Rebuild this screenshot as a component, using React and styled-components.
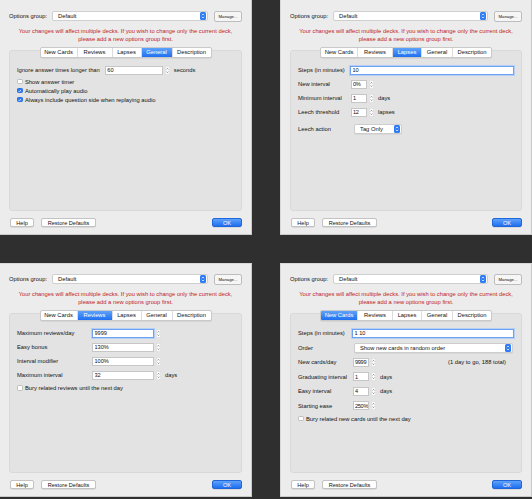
import React from "react";
import styled, { createGlobalStyle } from "styled-components";

const GlobalStyle = createGlobalStyle`
  html, body {
    margin: 0;
    padding: 0;
    background: #2f2f2f;
  }
  body {
    font-family: "Liberation Sans", Arial, sans-serif;
  }
`;

const Screen = styled.div`
  display: grid;
  grid-template-columns: 252px 252px;
  grid-template-rows: 235px 234px;
  column-gap: 28px;
  row-gap: 28px;
  width: 532px;
  height: 499px;
  background: #2f2f2f;
`;

const Window = styled.div`
  box-sizing: border-box;
  display: flex;
  flex-direction: column;
  background: #ececec;
  border: 1px solid #c9c9c9;
  border-top: ${(p) => (p.$cropTop ? "none" : "1px solid #d8d8d8")};
  border-left: ${(p) => (p.$cropLeft ? "none" : "1px solid #d8d8d8")};
  padding: ${(p) => (p.$cropTop ? "11px" : "10px")} 9px 7px 9px;
  color: #111;
  font-size: 5.8px;
`;

const HeaderRow = styled.div`
  display: flex;
  align-items: center;
  height: 10px;
`;

const GroupLabel = styled.span`
  width: 43px;
`;

const Combo = styled.div`
  box-sizing: border-box;
  flex: 1;
  height: 10px;
  display: flex;
  align-items: center;
  justify-content: space-between;
  background: #fff;
  border: 0.5px solid #cfcfcf;
  border-radius: 2px;
  padding: 0 1px 0 5px;
`;

const ManageButton = styled.div`
  box-sizing: border-box;
  width: 28px;
  height: 11px;
  margin-left: 6px;
  display: flex;
  align-items: center;
  justify-content: center;
  background: #f6f6f6;
  border: 0.5px solid #bdbdbd;
  border-radius: 2px;
  font-size: 4.3px;
`;

const Warning = styled.p`
  margin: 7px 0 0;
  line-height: 7.5px;
  text-align: center;
  color: #c22226;
`;

const TabPane = styled.div`
  box-sizing: border-box;
  flex: 1;
  margin-top: 7px;
  display: flex;
  flex-direction: column;
  background: #e3e3e3;
  border: 0.5px solid #d9d9d9;
  border-radius: 3px;
  padding: 0 7px;
`;

const TabBar = styled.div`
  display: flex;
  align-self: center;
  height: 9px;
  margin-top: -4.5px;
  background: #fff;
  border: 0.5px solid #c9c9c9;
  border-radius: 2px;
  overflow: hidden;
  box-shadow: 0 0.5px 0.5px rgba(0, 0, 0, 0.12);
`;

const Tab = styled.div`
  width: ${(p) => p.$w}px;
  display: flex;
  align-items: center;
  justify-content: center;
  border-left: 0.5px solid #dcdcdc;
  color: ${(p) => (p.$active ? "#fff" : "#111")};
  background: ${(p) =>
    p.$active ? "linear-gradient(#5ea2fa, #1f6ff0)" : "transparent"};
  &:first-child {
    border-left: none;
  }
`;

const Form = styled.div`
  display: flex;
  flex-direction: column;
  margin-top: 5.5px;
`;

const Row = styled.div`
  display: flex;
  align-items: center;
  height: ${(p) => p.$h || 14}px;
  margin-top: ${(p) => p.$gap || 0}px;
`;

const Label = styled.span`
  width: ${(p) => (p.$w ? `${p.$w}px` : "auto")};
  flex-shrink: 0;
  white-space: nowrap;
  margin-right: ${(p) => p.$mr || 0}px;
`;

const Field = styled.input`
  box-sizing: border-box;
  width: ${(p) => p.$w}px;
  height: 9px;
  margin: 0;
  padding: 0 0 0 ${(p) => (p.$w < 20 ? 1 : 1.5)}px;
  background: #fff;
  border: ${(p) => (p.$focus ? "0.8px solid #6fa1f2" : "0.5px solid #c6c6c6")};
  box-shadow: ${(p) => (p.$focus ? "0 0 0 1px #b4cff7" : "none")};
  font-family: inherit;
  font-size: 5.6px;
  letter-spacing: ${(p) => (p.$w < 20 ? "-0.3px" : "0")};
  color: #111;
  outline: none;
`;

const Unit = styled.span`
  margin-left: ${(p) => p.$ml || 4}px;
`;

const Popup = styled.div`
  box-sizing: border-box;
  width: ${(p) => p.$w}px;
  height: 10px;
  margin-left: ${(p) => p.$ml || 0}px;
  display: flex;
  align-items: center;
  justify-content: space-between;
  background: #fff;
  border: 0.5px solid #cdcdcd;
  border-radius: 2px;
  padding: 0 1px 0 5px;
  box-shadow: 0 0.5px 0.5px rgba(0, 0, 0, 0.1);
`;

const Note = styled.span`
  margin-left: auto;
  margin-right: 8px;
`;

const CheckRow = styled.label`
  display: flex;
  align-items: center;
  height: 9px;
  margin-top: ${(p) => p.$gap || 0}px;
`;

const Box = styled.span`
  box-sizing: border-box;
  width: 5.5px;
  height: 5.5px;
  margin-right: 2.5px;
  display: flex;
  align-items: center;
  justify-content: center;
  border-radius: 1.3px;
  background: ${(p) => (p.$on ? "#2f7cf6" : "#fff")};
  border: 0.5px solid ${(p) => (p.$on ? "#2a6fe0" : "#bdbdbd")};
`;

const Footer = styled.div`
  display: flex;
  align-items: center;
  gap: 7px;
  height: 9px;
  margin-top: 7px;
  padding-left: 1px;
`;

const Button = styled.div`
  box-sizing: border-box;
  width: ${(p) => p.$w}px;
  height: 8.5px;
  display: flex;
  align-items: center;
  justify-content: center;
  margin-left: ${(p) => (p.$push ? "auto" : "0")};
  border-radius: 2px;
  font-size: 5.6px;
  color: ${(p) => (p.$primary ? "#fff" : "#111")};
  background: ${(p) =>
    p.$primary ? "linear-gradient(#5ea2fa, #1f6ff0)" : "#fff"};
  border: 0.5px solid ${(p) => (p.$primary ? "#1f66d8" : "#c3c3c3")};
  box-shadow: 0 0.5px 0.5px rgba(0, 0, 0, 0.15);
`;

const Stepper = ({ ml = 2 }) => (
  <svg width="5" height="9" viewBox="0 0 5 9" style={{ marginLeft: ml, flexShrink: 0 }}>
    <rect x="0.25" y="0.25" width="4.5" height="8.5" rx="1.5" fill="#fafafa" stroke="#cdcdcd" strokeWidth="0.5" />
    <path d="M1.5 3.4 L2.5 2.4 L3.5 3.4" fill="none" stroke="#555" strokeWidth="0.6" />
    <path d="M1.5 5.6 L2.5 6.6 L3.5 5.6" fill="none" stroke="#555" strokeWidth="0.6" />
  </svg>
);

const BlueArrows = () => (
  <svg width="6" height="8" viewBox="0 0 6 8">
    <rect width="6" height="8" rx="1.5" fill="#2f7cf6" />
    <path d="M1.8 3.2 L3 2 L4.2 3.2" fill="none" stroke="#fff" strokeWidth="0.7" />
    <path d="M1.8 4.8 L3 6 L4.2 4.8" fill="none" stroke="#fff" strokeWidth="0.7" />
  </svg>
);

const Tick = () => (
  <svg width="4" height="4" viewBox="0 0 4 4">
    <path d="M0.7 2.1 L1.6 3 L3.3 0.9" fill="none" stroke="#fff" strokeWidth="0.8" />
  </svg>
);

const Check = ({ on, children, gap }) => (
  <CheckRow $gap={gap}>
    <Box $on={on}>{on && <Tick />}</Box>
    {children}
  </CheckRow>
);

const TABS = [
  ["New Cards", 36],
  ["Reviews", 34],
  ["Lapses", 28],
  ["General", 30],
  ["Description", 38],
];

const Dialog = ({ active, cropTop, cropLeft, children }) => (
  <Window $cropTop={cropTop} $cropLeft={cropLeft}>
    <HeaderRow>
      <GroupLabel>Options group:</GroupLabel>
      <Combo>
        <span>Default</span>
        <BlueArrows />
      </Combo>
      <ManageButton>Manage...</ManageButton>
    </HeaderRow>
    <Warning>
      Your changes will affect multiple decks. If you wish to change only the current deck,
      <br />
      please add a new options group first.
    </Warning>
    <TabPane>
      <TabBar>
        {TABS.map(([name, w]) => (
          <Tab key={name} $w={w} $active={name === active}>
            {name}
          </Tab>
        ))}
      </TabBar>
      <Form>{children}</Form>
    </TabPane>
    <Footer>
      <Button $w={24}>Help</Button>
      <Button $w={55}>Restore Defaults</Button>
      <Button $w={30} $primary $push>
        OK
      </Button>
    </Footer>
  </Window>
);

const GeneralTab = () => (
  <>
    <Row>
      <Label $mr={5}>Ignore answer times longer than</Label>
      <Field $w={58} readOnly value="60" />
      <Stepper />
      <Unit $ml={4}>seconds</Unit>
    </Row>
    <Check>Show answer timer</Check>
    <Check on>Automatically play audio</Check>
    <Check on>Always include question side when replaying audio</Check>
  </>
);

const LapsesTab = () => (
  <>
    <Row>
      <Label $w={52}>Steps (in minutes)</Label>
      <Field $w={169} $focus readOnly value="10" />
    </Row>
    <Row>
      <Label $w={53}>New interval</Label>
      <Field $w={16} readOnly value="0%" />
      <Stepper />
    </Row>
    <Row>
      <Label $w={53}>Minimum interval</Label>
      <Field $w={16} readOnly value="1" />
      <Stepper />
      <Unit>days</Unit>
    </Row>
    <Row>
      <Label $w={53}>Leech threshold</Label>
      <Field $w={16} readOnly value="12" />
      <Stepper />
      <Unit>lapses</Unit>
    </Row>
    <Row $gap={3}>
      <Label $w={52}>Leech action</Label>
      <Popup $w={48} $ml={4}>
        <span>Tag Only</span>
        <BlueArrows />
      </Popup>
    </Row>
  </>
);

const ReviewsTab = () => (
  <>
    <Row>
      <Label $w={75}>Maximum reviews/day</Label>
      <Field $w={62} $focus readOnly value="9999" />
      <Stepper />
    </Row>
    <Row>
      <Label $w={75}>Easy bonus</Label>
      <Field $w={62} readOnly value="130%" />
      <Stepper />
    </Row>
    <Row>
      <Label $w={75}>Interval modifier</Label>
      <Field $w={62} readOnly value="100%" />
      <Stepper />
    </Row>
    <Row>
      <Label $w={75}>Maximum interval</Label>
      <Field $w={62} readOnly value="32" />
      <Stepper />
      <Unit>days</Unit>
    </Row>
    <Check gap={1.5}>Bury related reviews until the next day</Check>
  </>
);

const NewCardsTab = () => (
  <>
    <Row $h={14.5}>
      <Label $w={54}>Steps (in minutes)</Label>
      <Field $w={162} $focus readOnly value="1 10" />
    </Row>
    <Row $h={14.5}>
      <Label $w={56}>Order</Label>
      <Popup $w={159}>
        <span>Show new cards in random order</span>
        <BlueArrows />
      </Popup>
    </Row>
    <Row $h={14.5}>
      <Label $w={55}>New cards/day</Label>
      <Field $w={16} readOnly value="9999" />
      <Stepper />
      <Note>(1 day to go, 188 total)</Note>
    </Row>
    <Row $h={14.5}>
      <Label $w={55}>Graduating interval</Label>
      <Field $w={16} readOnly value="1" />
      <Stepper />
      <Unit>days</Unit>
    </Row>
    <Row $h={14.5}>
      <Label $w={55}>Easy interval</Label>
      <Field $w={16} readOnly value="4" />
      <Stepper />
      <Unit>days</Unit>
    </Row>
    <Row $h={14.5}>
      <Label $w={55}>Starting ease</Label>
      <Field $w={16} readOnly value="250%" />
      <Stepper />
    </Row>
    <Check gap={1}>Bury related new cards until the next day</Check>
  </>
);

export default function App() {
  return (
    <>
      <GlobalStyle />
      <Screen>
        <Dialog active="General" cropTop cropLeft>
          <GeneralTab />
        </Dialog>
        <Dialog active="Lapses" cropTop>
          <LapsesTab />
        </Dialog>
        <Dialog active="Reviews" cropLeft>
          <ReviewsTab />
        </Dialog>
        <Dialog active="New Cards">
          <NewCardsTab />
        </Dialog>
      </Screen>
    </>
  );
}
